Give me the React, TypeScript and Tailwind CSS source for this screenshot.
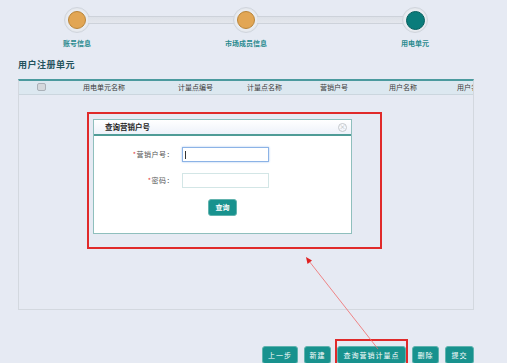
import { Fragment } from "react";

const steps = ["账号信息", "市场成员信息", "用电单元"];
const cols = [
  { label: "用电单元名称", x: 64 },
  { label: "计量点编号", x: 159 },
  { label: "计量点名称", x: 228 },
  { label: "营销户号", x: 301 },
  { label: "用户名称", x: 370 },
  { label: "用户名", x: 438 },
];
const actions = [
  { label: "上一步", w: "w-[36px]" },
  { label: "新建", w: "w-[27px]" },
  { label: "查询营销计量点", w: "w-[69px]" },
  { label: "删除", w: "w-[27px]" },
  { label: "提交", w: "w-[29px]" },
];

function Step({ done }: { done: boolean }) {
  return (
    <div className="flex h-[26px] w-[26px] shrink-0 items-center justify-center rounded-full border border-[#d0d5dd] bg-[#e9ecf1] shadow-[inset_0_0_2px_rgba(0,0,0,0.08)]">
      <div
        className={
          done
            ? "h-[18px] w-[18px] rounded-full border border-[#b9853a] bg-[#e2a654]"
            : "h-[19px] w-[19px] rounded-full border border-[#07605f] bg-[#0a7c7b]"
        }
      />
    </div>
  );
}

export default function App() {
  return (
    <div
      className="relative h-[363px] w-[507px] overflow-hidden bg-[#e6eaf3]"
      style={{ fontFamily: '"Noto Sans CJK SC", "Noto Sans", sans-serif' }}
    >
      {/* Stepper */}
      <div className="ml-[64px] flex w-[364px] items-center pt-[7px]">
        {steps.map((s, i) => (
          <Fragment key={s}>
            <Step done={i < 2} />
            {i < 2 && (
              <div className="-mx-[2px] h-[8px] flex-1 border-y border-[#cdd2da] bg-gradient-to-b from-[#dde1e8] to-[#e4e7ed]" />
            )}
          </Fragment>
        ))}
      </div>
      <div className="ml-[47px] mt-[5px] flex w-[398px] justify-between text-[7px] font-bold leading-[10px] text-[#2a8a8f]">
        {steps.map((s) => (
          <span key={s} className="w-[60px] text-center">
            {s}
          </span>
        ))}
      </div>

      <h2 className="ml-[18px] mt-[11px] text-[9px] font-bold leading-[12px] tracking-[0.5px] text-[#24525c]">
        用户注册单元
      </h2>

      {/* Table panel */}
      <div className="ml-[18px] mt-[8px] h-[231px] w-[456px] border-x border-b border-t-2 border-[#d3d8df] border-t-[#4b9a9e]">
        <div className="relative h-[14px] overflow-hidden border-b border-[#cbd6de] bg-[#dce8f0] text-[7px] leading-[13px] text-[#3a3a3a]">
          <div className="absolute left-[18px] top-[2px] h-[8px] w-[9px] rounded-[2px] border border-[#aab1b8] bg-[#d4d8dc]" />
          {cols.map((c) => (
            <span key={c.label} className="absolute top-0 whitespace-nowrap" style={{ left: c.x }}>
              {c.label}
            </span>
          ))}
        </div>
      </div>

      {/* Action buttons */}
      <div className="mr-[33px] mt-[36px] flex justify-end gap-[6px]">
        {actions.map((a) => (
          <button
            key={a.label}
            className={`${a.w} h-[18px] rounded-[3px] border border-[#5fb3ae] bg-[#18928e] text-[7px] leading-[14px] tracking-[1px] text-white`}
          >
            {a.label}
          </button>
        ))}
      </div>

      {/* Dialog */}
      <div className="absolute left-[93px] top-[119px] h-[115px] w-[259px] border border-[#8fbfbd] bg-white">
        <div className="flex h-[16px] items-center justify-between border-b-2 border-[#4f9c97] bg-gradient-to-b from-white to-[#eef2fa] pl-[11px] pr-[4px]">
          <span className="text-[7.5px] font-bold text-[#222]">查询营销户号</span>
          <span className="flex h-[9px] w-[9px] items-center justify-center rounded-full border border-[#c4c8cc] text-[6px] leading-none text-[#b0b4b8]">
            ×
          </span>
        </div>
        <div className="flex flex-col items-start">
          <div className="mt-[11px] flex items-center">
            <span className="w-[80px] text-right text-[7px] tracking-[0.5px] text-[#555]">
              <span className="text-[#e23b3b]">*</span>营销户号：
            </span>
            <div className="ml-[8px] flex h-[15px] w-[87px] items-center border border-[#8cb3e6] pl-[2px] shadow-[0_0_2px_#a9c6ee]">
              <div className="h-[8px] w-px bg-[#333]" />
            </div>
          </div>
          <div className="mt-[11px] flex items-center">
            <span className="w-[80px] text-right text-[7px] tracking-[0.5px] text-[#555]">
              <span className="text-[#e23b3b]">*</span>密码：
            </span>
            <div className="ml-[8px] h-[15px] w-[87px] border border-[#d3e6e6]" />
          </div>
          <button className="ml-[114px] mt-[11px] h-[17px] w-[29px] rounded-[3px] border border-[#62b3ae] bg-[#18928e] text-[7px] font-bold text-white">
            查询
          </button>
        </div>
      </div>

      {/* Annotations */}
      <div className="absolute left-[87px] top-[112px] h-[137px] w-[295px] border-2 border-[#e02a2a]" />
      <div className="absolute left-[335px] top-[339px] h-[26px] w-[73px] border-2 border-[#e02a2a]" />
      <svg className="absolute left-0 top-0" width="507" height="363">
        <line x1="378" y1="349" x2="309" y2="261" stroke="#f06a6a" strokeWidth="0.8" />
        <polygon points="306,257 307.5,264 312,260.5" fill="#e02020" />
      </svg>
    </div>
  );
}
